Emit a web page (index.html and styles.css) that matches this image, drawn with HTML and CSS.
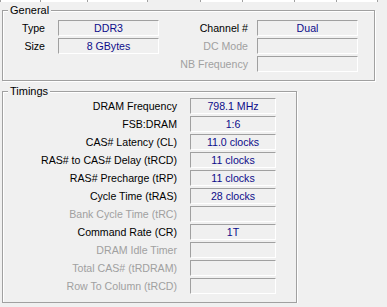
FILE: index.html
```html
<!DOCTYPE html>
<html lang="en">
<head>
    <meta charset="UTF-8">
    <meta name="viewport" content="width=device-width, initial-scale=1.0">
    <title>Memory</title>
    <link rel="stylesheet" href="styles.css">
</head>
<body>
    <div class="tabs">
        <span class="tab"></span>
        <span class="tab"></span>
        <span class="tab"></span>
        <span class="tab active"></span>
        <span class="tab"></span>
        <span class="tab"></span>
        <span class="tab"></span>
        <span class="tab"></span>
    </div>

    <div class="group general">
        <span class="group-title">General</span>
        <div class="grid general-grid">
            <div class="label">Type</div>
            <div class="field">DDR3</div>
            <div class="label label-right">Channel #</div>
            <div class="field">Dual</div>

            <div class="label">Size</div>
            <div class="field">8 GBytes</div>
            <div class="label label-right off">DC Mode</div>
            <div class="field"></div>

            <div class="label"></div>
            <div></div>
            <div class="label label-right off">NB Frequency</div>
            <div class="field"></div>
        </div>
    </div>

    <div class="group timings">
        <span class="group-title">Timings</span>
        <div class="grid timings-grid">
            <div class="label">DRAM Frequency</div>
            <div class="field">798.1 MHz</div>
            <div class="label">FSB:DRAM</div>
            <div class="field">1:6</div>
            <div class="label">CAS# Latency (CL)</div>
            <div class="field">11.0 clocks</div>
            <div class="label">RAS# to CAS# Delay (tRCD)</div>
            <div class="field">11 clocks</div>
            <div class="label">RAS# Precharge (tRP)</div>
            <div class="field">11 clocks</div>
            <div class="label">Cycle Time (tRAS)</div>
            <div class="field">28 clocks</div>
            <div class="label off">Bank Cycle Time (tRC)</div>
            <div class="field"></div>
            <div class="label">Command Rate (CR)</div>
            <div class="field">1T</div>
            <div class="label off">DRAM Idle Timer</div>
            <div class="field"></div>
            <div class="label off">Total CAS# (tRDRAM)</div>
            <div class="field"></div>
            <div class="label off">Row To Column (tRCD)</div>
            <div class="field"></div>
        </div>
    </div>
</body>
</html>
```

FILE: styles.css
```css
body {
    margin: 0;
    background-color: #f0f0f0;
    font-family: 'Liberation Sans', Arial, sans-serif;
    font-size: 10.6px;
    color: #000;
}
.tabs {
    display: grid;
    grid-template-columns: 41px 47px 60px 53px 42px 52px 42px 41px;
    height: 2px;
}
.tab {
    background-color: #fff;
    border-right: 1px solid #a0a0a0;
}
.tab:first-child {
    border-left: 1px solid #a0a0a0;
}
.tab.active {
    background-color: transparent;
}
.group {
    position: relative;
    margin-left: 2px;
    border: 1px solid #a0a0a0;
    box-shadow: inset 1px 1px #fff, 1px 1px #fff;
}
.group-title {
    position: absolute;
    top: -7px;
    left: 5px;
    padding: 0 2px;
    line-height: 13px;
    background-color: #f0f0f0;
    font-size: 11px;
}
.general {
    margin-top: 8px;
    width: 371px;
    height: 69px;
}
.timings {
    margin-top: 10px;
    width: 293px;
    height: 210px;
}
.grid {
    display: grid;
    grid-auto-rows: 16px;
    row-gap: 2px;
}
.general-grid {
    padding-top: 9px;
    grid-template-columns: 55px 101px 98px 101px;
}
.timings-grid {
    padding-top: 6px;
    grid-template-columns: 187px 86px;
}
.label {
    text-align: right;
    padding-right: 13px;
    line-height: 16px;
    white-space: nowrap;
}
.label-right {
    padding-right: 9px;
}
.off {
    color: #a0a0a0;
}
.field {
    box-sizing: border-box;
    border: 1px solid;
    border-color: #a0a0a0 #fff #fff #a0a0a0;
    text-align: center;
    line-height: 14px;
    color: #0c0c8a;
}
```
